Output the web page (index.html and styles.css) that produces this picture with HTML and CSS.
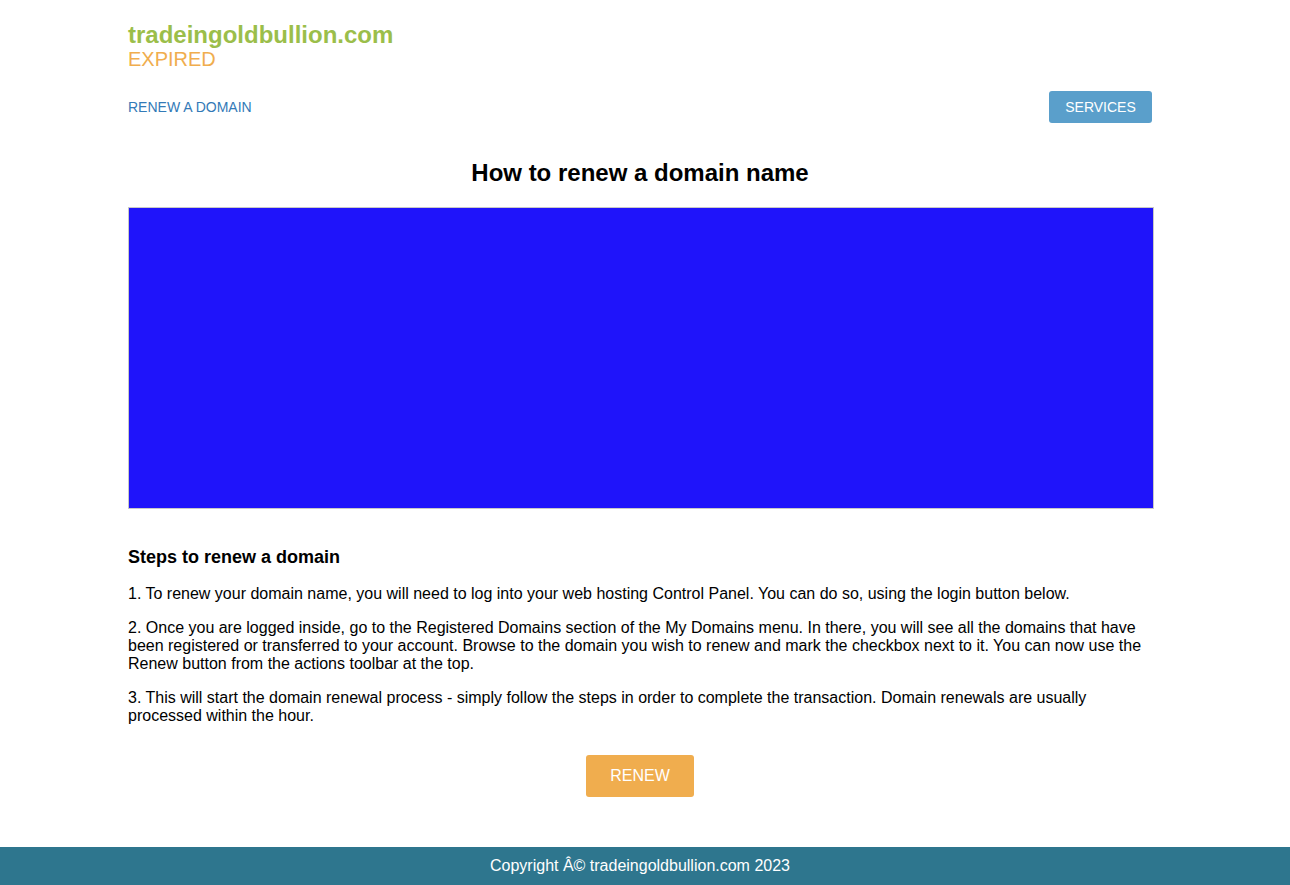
FILE: index.html
```html
<!DOCTYPE html>
<html>
<head>
<meta charset="utf-8">
<title>tradeingoldbullion.com</title>
<link rel="stylesheet" href="styles.css">
</head>
<body>
<div class="container">
  <header class="brand">
    <div class="domain">tradeingoldbullion.com</div>
    <div class="status">EXPIRED</div>
  </header>
  <nav class="nav">
    <a class="nav-link" href="#">RENEW A DOMAIN</a>
    <a class="btn-services" href="#">SERVICES</a>
  </nav>
  <h1 class="title">How to renew a domain name</h1>
  <div class="video"></div>
  <section class="steps">
    <h2 class="steps-title">Steps to renew a domain</h2>
    <p>1. To renew your domain name, you will need to log into your web hosting Control Panel. You can do so, using the login button below.</p>
    <p>2. Once you are logged inside, go to the Registered Domains section of the My Domains menu. In there, you will see all the domains that have been registered or transferred to your account. Browse to the domain you wish to renew and mark the checkbox next to it. You can now use the Renew button from the actions toolbar at the top.</p>
    <p>3. This will start the domain renewal process - simply follow the steps in order to complete the transaction. Domain renewals are usually processed within the hour.</p>
  </section>
  <div class="cta">
    <a class="btn-renew" href="#">RENEW</a>
  </div>
</div>
<footer class="footer">Copyright Â© tradeingoldbullion.com 2023</footer>
</body>
</html>
```
FILE: styles.css
```css
html, body {
  margin: 0;
  padding: 0;
  background: #fff;
  font-family: "Liberation Sans", Arial, sans-serif;
  color: #000;
}
.container {
  width: 1024px;
  margin-left: 128px;
}
.brand {
  padding-top: 21px;
}
.domain {
  font-size: 24px;
  font-weight: bold;
  color: #9bbe4a;
  line-height: 27px;
}
.status {
  font-size: 20px;
  color: #f0ad4e;
  line-height: 23px;
}
.nav {
  display: flex;
  justify-content: space-between;
  align-items: center;
  margin-top: 20px;
}
.nav-link {
  font-size: 14px;
  color: #337ab7;
  text-decoration: none;
}
.btn-services {
  display: inline-block;
  background: #5a9fcb;
  color: #fff;
  font-size: 14px;
  text-decoration: none;
  width: 103px;
  height: 32px;
  line-height: 32px;
  text-align: center;
  border-radius: 3px;
}
.title {
  text-align: center;
  font-size: 24px;
  line-height: 27px;
  margin: 36px 0 21px;
}
.video {
  width: 1024px;
  height: 300px;
  background: #1f14fa;
  border: 1px solid #c8c8c8;
}
.steps {
  margin-top: 38px;
}
.steps-title {
  font-size: 18px;
  line-height: 20px;
  margin: 0 0 18px;
}
.steps p {
  font-size: 16px;
  line-height: 18px;
  margin: 0 0 16px;
}
.cta {
  display: flex;
  justify-content: center;
  margin-top: 30px;
  padding-bottom: 50px;
}
.btn-renew {
  display: inline-block;
  width: 108px;
  height: 42px;
  line-height: 42px;
  text-align: center;
  background: #f0ad4e;
  color: #fff;
  font-size: 16px;
  text-decoration: none;
  border-radius: 3px;
}
.footer {
  background: #2e768e;
  color: #fff;
  font-size: 16px;
  text-align: center;
  height: 38px;
  line-height: 38px;
  padding-right: 10px;
}
```
